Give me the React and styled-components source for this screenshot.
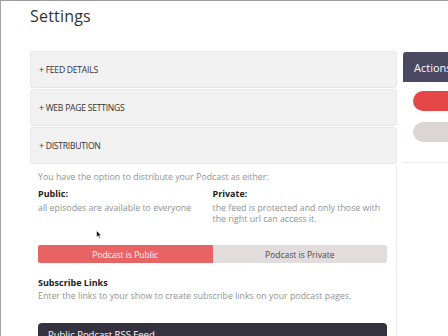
import React from 'react';
import styled, { createGlobalStyle } from 'styled-components';

const GlobalStyle = createGlobalStyle`
  html, body {
    margin: 0;
    padding: 0;
    background: #ffffff;
    overflow: hidden;
  }
  body {
    font-family: 'Open Sans', 'Noto Sans', sans-serif;
    color: #333;
  }
  * {
    box-sizing: border-box;
  }
`;

const Frame = styled.div`
  width: 448px;
  height: 336px;
  overflow: hidden;
  border-top: 1px solid #9d9d9d;
  border-left: 1px solid #a5a5a5;
  padding-left: 29px;
`;

const Title = styled.h1`
  margin: 0;
  padding-top: 3px;
  font-size: 16px;
  line-height: 24px;
  font-weight: 400;
  color: #333;
  letter-spacing: 0.2px;
`;

const Layout = styled.div`
  display: flex;
  gap: 6px;
  margin-top: 23px;
`;

const Main = styled.div`
  width: 367px;
  flex-shrink: 0;
`;

const Section = styled.div`
  height: 37px;
  margin-bottom: 1px;
  display: flex;
  align-items: center;
  padding-left: 8px;
  background: #f1f1f1;
  border: 1px solid #e7e7e7;
  border-radius: 3px;
  font-size: 8.6px;
  letter-spacing: -0.25px;
  text-transform: uppercase;
  color: #333;
`;

const Content = styled.div`
  position: relative;
  padding: 7px 9px 0 8px;
  border-right: 1px solid #e8e8e8;
  height: 172px;
`;

const Muted = styled.p`
  margin: 0;
  font-size: 8.8px;
  line-height: 11px;
  color: #929292;
`;

const Columns = styled.div`
  display: grid;
  grid-template-columns: 1fr 1fr;
  margin-top: 5px;
`;

const Label = styled.div`
  font-size: 9px;
  line-height: 12px;
  font-weight: 700;
  color: #222;
  margin-bottom: 3px;
`;

const Toggle = styled.div`
  display: grid;
  grid-template-columns: 1fr 1fr;
  margin-top: 20px;
  height: 18px;
`;

const ToggleButton = styled.div`
  display: flex;
  align-items: center;
  justify-content: center;
  font-size: 8.5px;
  background: ${(p) => (p.active ? '#e86363' : '#e2dcdc')};
  color: ${(p) => (p.active ? '#ffffff' : '#4a4a4a')};
  border-radius: ${(p) => (p.active ? '2px 0 0 2px' : '0 2px 2px 0')};
`;

const SubHeading = styled(Label)`
  margin-top: 14px;
  margin-bottom: 2px;
`;

const FeedBar = styled.div`
  margin-top: 21px;
  height: 24px;
  background: #35323f;
  border-radius: 4px 4px 0 0;
  color: #fff;
  font-size: 9.5px;
  padding: 5px 10px;
`;

const Cursor = styled.svg`
  position: absolute;
  left: 66px;
  top: 65px;
`;

const Sidebar = styled.div`
  flex: 1;
  margin-top: 1px;
`;

const SideHeader = styled.div`
  height: 30px;
  display: flex;
  align-items: center;
  padding-left: 11px;
  background: #4b4862;
  border-radius: 3px 0 0 0;
  color: #fff;
  font-size: 11px;
  white-space: nowrap;
  overflow: hidden;
`;

const SideBody = styled.div`
  padding: 9px 0 20px 10px;
  display: flex;
  flex-direction: column;
  gap: 11px;
  border-bottom: 1px solid #ececec;
`;

const Pill = styled.div`
  height: 20px;
  border-radius: 10px 0 0 10px;
  background: ${(p) => p.color};
`;

const sections = ['+ Feed details', '+ Web page settings', '+ Distribution'];

const App = () => {
  return (
    <Frame>
      <GlobalStyle />
      <Title>Settings</Title>
      <Layout>
        <Main>
          {sections.map((s) => (
            <Section key={s}>{s}</Section>
          ))}
          <Content>
            <Muted>You have the option to distribute your Podcast as either:</Muted>
            <Columns>
              <div>
                <Label>Public:</Label>
                <Muted>all episodes are available to everyone</Muted>
              </div>
              <div>
                <Label>Private:</Label>
                <Muted>
                  the feed is protected and only those with
                  <br />
                  the right url can access it.
                </Muted>
              </div>
            </Columns>
            <Toggle>
              <ToggleButton active>Podcast is Public</ToggleButton>
              <ToggleButton>Podcast is Private</ToggleButton>
            </Toggle>
            <SubHeading>Subscribe Links</SubHeading>
            <Muted>Enter the links to your show to create subscribe links on your podcast pages.</Muted>
            <FeedBar>Public Podcast RSS Feed</FeedBar>
            <Cursor width="6" height="9" viewBox="0 0 6 9">
              <path d="M0.5 0.5 L0.5 7.5 L2.2 5.8 L3.4 8.5 L4.4 8 L3.3 5.4 L5.5 5.4 Z" fill="#111" stroke="#fff" strokeWidth="0.6" />
            </Cursor>
          </Content>
        </Main>
        <Sidebar>
          <SideHeader>Actions</SideHeader>
          <SideBody>
            <Pill color="#e54646" />
            <Pill color="#dcd5d5" />
          </SideBody>
        </Sidebar>
      </Layout>
    </Frame>
  );
};

export default App;
